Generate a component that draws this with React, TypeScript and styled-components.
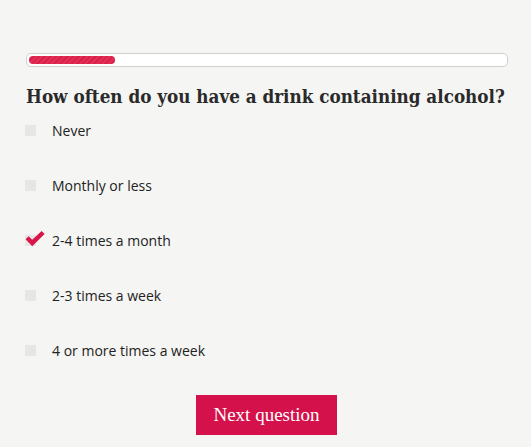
import React, { useState } from 'react';
import styled, { createGlobalStyle } from 'styled-components';

const GlobalStyle = createGlobalStyle`
    html, body {
        margin: 0;
        padding: 0;
        background: #f5f5f3;
    }
`;

const options = [
    'Never',
    'Monthly or less',
    '2-4 times a month',
    '2-3 times a week',
    '4 or more times a week',
];

const App = () => {
    const [selected, setSelected] = useState(2);
    const progress = 18;

    return (
        <>
            <GlobalStyle />
            <Page>
                <Track>
                    <Fill style={{ width: `${progress}%` }} />
                </Track>
                <Question>How often do you have a drink containing alcohol?</Question>
                <OptionList>
                    {options.map((label, i) => (
                        <Option key={label} onClick={() => setSelected(i)}>
                            <Box>
                                {selected === i && (
                                    <Tick viewBox="0 0 20 16">
                                        <path d="M0.6 8.2 L3.6 5.2 L7.2 8.8 L16.6 0 L19.6 3 L7.2 15.2 Z" fill="#d9154a" />
                                    </Tick>
                                )}
                            </Box>
                            <Label>{label}</Label>
                        </Option>
                    ))}
                </OptionList>
                <ButtonRow>
                    <NextButton>Next question</NextButton>
                </ButtonRow>
            </Page>
        </>
    );
};

export default App;

const Page = styled.div`
    width: 531px;
    height: 447px;
    box-sizing: border-box;
    padding: 53px 23px 0 26px;
    background: #f5f5f3;
    overflow: hidden;
`;

const Track = styled.div`
    height: 14px;
    box-sizing: border-box;
    border: 1px solid #cfcfcf;
    border-radius: 5px;
    background: #ffffff;
    padding: 2px;
`;

const Fill = styled.div`
    height: 8px;
    border-radius: 4px;
    background-color: #dc1e48;
    background-image: repeating-linear-gradient(
        -45deg,
        rgba(255, 255, 255, 0.08) 0 2px,
        transparent 2px 4px
    );
`;

const Question = styled.h1`
    margin: 18px 0 0 0;
    font-family: "DejaVu Serif", "Liberation Serif", serif;
    font-stretch: condensed;
    font-weight: bold;
    font-size: 18.7px;
    line-height: 22px;
    color: #2a2a2a;
    white-space: nowrap;
`;

const OptionList = styled.div`
    display: flex;
    flex-direction: column;
    gap: 35px;
    margin-top: 13px;
`;

const Option = styled.div`
    display: flex;
    align-items: center;
    height: 20px;
    cursor: pointer;
`;

const Box = styled.div`
    position: relative;
    width: 11px;
    height: 11px;
    margin-left: -1px;
    margin-right: 16px;
    background: #e6e6e6;
`;

const Tick = styled.svg`
    position: absolute;
    left: 0;
    top: -4px;
    width: 20px;
    height: 16px;
`;

const Label = styled.span`
    font-family: "Open Sans", "Noto Sans", sans-serif;
    font-size: 14px;
    font-weight: 500;
    color: #222222;
`;

const ButtonRow = styled.div`
    display: flex;
    justify-content: center;
    margin-top: 35px;
    padding-right: 1px;
`;

const NextButton = styled.button`
    width: 141px;
    height: 40px;
    border: none;
    border-radius: 0;
    background: #d4114a;
    color: #ffffff;
    font-family: "Liberation Serif", "DejaVu Serif", serif;
    font-size: 19px;
    cursor: pointer;
`;
